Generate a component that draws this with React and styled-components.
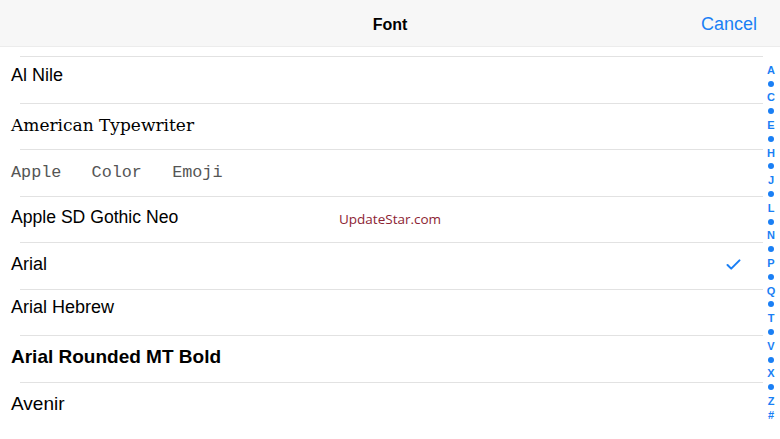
import React from 'react';
import styled, { createGlobalStyle } from 'styled-components';

const GlobalStyle = createGlobalStyle`
	html, body {
		margin: 0;
		padding: 0;
		background: #fff;
	}
	body {
		font-family: 'Liberation Sans', Arial, sans-serif;
	}
`;

const fonts = [
	{ name: 'Al Nile', lift: 6 },
	{ name: 'American Typewriter', family: "'DejaVu Serif', serif", size: 17 },
	{ name: 'Apple   Color   Emoji', family: "'Liberation Mono', monospace", size: 16.8, color: '#555', lift: -3 },
	{ name: 'Apple SD Gothic Neo', size: 17.6 },
	{ name: 'Arial', checked: true },
	{ name: 'Arial Hebrew', lift: 6 },
	{ name: 'Arial Rounded MT Bold', weight: 700, size: 19 },
	{ name: 'Avenir', size: 19 },
];

const index = ['A', '•', 'C', '•', 'E', '•', 'H', '•', 'J', '•', 'L', '•', 'N', '•', 'P', '•', 'Q', '•', 'T', '•', 'V', '•', 'X', '•', 'Z', '#'];

const FontPicker = () => {
	return (
		<Screen>
			<GlobalStyle />
			<Header>
				<Title>Font</Title>
				<CancelButton>Cancel</CancelButton>
			</Header>
			<Body>
				<List>
					{fonts.map((f) => (
						<Row key={f.name} $lift={f.lift}>
							<RowLabel
								$family={f.family}
								$size={f.size}
								$weight={f.weight}
								$color={f.color}
							>
								{f.name}
							</RowLabel>
							{f.checked && (
								<Check viewBox="0 0 16 12">
									<polyline points="1.5,6.5 5.5,10.5 14.5,1.5" />
								</Check>
							)}
						</Row>
					))}
				</List>
				<IndexBar>
					{index.map((c, i) =>
						c === '•' ? (
							<IndexItem key={i}>
								<Dot />
							</IndexItem>
						) : (
							<IndexItem key={i}>{c}</IndexItem>
						)
					)}
				</IndexBar>
				<Watermark>UpdateStar.com</Watermark>
			</Body>
		</Screen>
	);
};

const Screen = styled.div`
	width: 780px;
	height: 439px;
	overflow: hidden;
	display: flex;
	flex-direction: column;
	background: #fff;
`;

const Header = styled.header`
	position: relative;
	height: 47px;
	flex-shrink: 0;
	display: flex;
	align-items: center;
	justify-content: flex-end;
	padding: 3px 23px 0 0;
	background: #f7f7f7;
	border-bottom: 1px solid #ececec;
	box-sizing: border-box;
`;

const Title = styled.h1`
	position: absolute;
	left: 0;
	right: 0;
	margin: 0;
	text-align: center;
	font-size: 16px;
	font-weight: 700;
	color: #000;
`;

const CancelButton = styled.button`
	position: relative;
	border: 0;
	background: none;
	padding: 0;
	font-family: 'Liberation Sans', Arial, sans-serif;
	font-size: 18px;
	color: #1a7ff5;
	cursor: pointer;
`;

const Body = styled.main`
	position: relative;
	flex: 1;
	display: flex;
	min-height: 0;
`;

const List = styled.ul`
	flex: 1;
	margin: 0;
	padding: 9px 0 0 0;
	list-style: none;
`;

const Row = styled.li`
	height: 46.5px;
	box-sizing: border-box;
	display: flex;
	align-items: center;
	justify-content: space-between;
	margin-left: 20px;
	padding: 0 22px ${(p) => 3 + (p.$lift || 0)}px 0;
	border-top: 1px solid #e2e2e2;
	position: relative;
`;

const RowLabel = styled.span`
	margin-left: -9px;
	white-space: pre;
	font-family: ${(p) => p.$family || "'Liberation Sans', Arial, sans-serif"};
	font-size: ${(p) => p.$size || 18}px;
	font-weight: ${(p) => p.$weight || 400};
	color: ${(p) => p.$color || '#000'};
`;

const Check = styled.svg`
	width: 15px;
	height: 11px;
	fill: none;
	stroke: #1a7ff5;
	stroke-width: 2.2;
	stroke-linecap: round;
	stroke-linejoin: round;
`;

const IndexBar = styled.nav`
	width: 16px;
	display: flex;
	flex-direction: column;
	align-items: center;
	padding-top: 16px;
	margin-right: 1px;
`;

const IndexItem = styled.div`
	height: 13.8px;
	display: flex;
	align-items: center;
	justify-content: center;
	font-size: 11px;
	font-weight: 700;
	color: #1a7ff5;
`;

const Dot = styled.span`
	width: 6px;
	height: 6px;
	border-radius: 50%;
	background: #1a7ff5;
`;

const Watermark = styled.div`
	position: absolute;
	left: 339px;
	top: 163px;
	font-family: 'Open Sans', sans-serif;
	font-size: 13.5px;
	color: #8c2433;
`;

export default FontPicker;
